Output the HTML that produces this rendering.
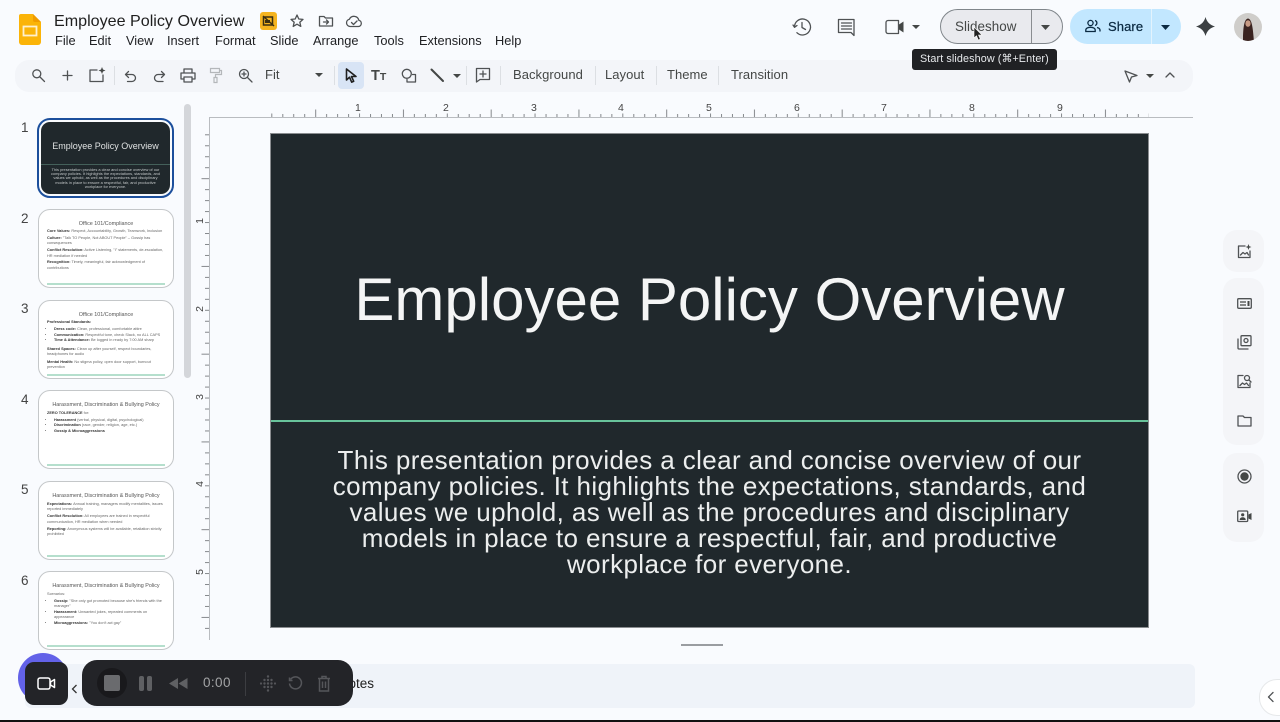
<!DOCTYPE html>
<html lang="en"><head><meta charset="utf-8"><title>Employee Policy Overview</title>
<style>
html,body{margin:0;padding:0;width:1280px;height:722px;overflow:hidden;background:#f9fbfe}
body{position:relative;font-family:"Liberation Sans",sans-serif;color:#3c4043}
.a{position:absolute}
.t{position:absolute;white-space:nowrap}
.m{position:absolute;top:33px;font-size:12.8px;line-height:16px;color:#202124;white-space:nowrap}
.tb{position:absolute;top:67px;font-size:13px;line-height:16px;color:#444746;white-space:nowrap;letter-spacing:.05px}
.sep{position:absolute;top:66px;width:1px;height:19px;background:#dcdfe3}
svg{position:absolute;overflow:visible}
.i{fill:none;stroke:#4f5254;stroke-width:1.3;stroke-linecap:round;stroke-linejoin:round}
.th{position:absolute;left:38px;width:134px;height:77px;border:1px solid #c4c7c9;border-radius:12px;background:#fff;overflow:hidden}
.th .h{position:absolute;left:0;right:0;top:11px;text-align:center;font-size:5.4px;line-height:7px;color:#555}
.th .b{position:absolute;left:8px;right:8px;top:20px;font-size:3.85px;line-height:5.4px;color:#666}
.th .b b{color:#333}
.th .b p{margin:0 0 1.6px}
.th .b ul{margin:0 0 1.6px;padding:0 0 0 7px}
.th .g{position:absolute;left:8px;right:8px;bottom:2.5px;height:1.5px;background:#b5dfcd}
.n{position:absolute;left:21px;font-size:13.5px;line-height:14px;color:#444;width:10px}
.pill{position:absolute;left:1223px;width:41px;background:#f4f5f8;border-radius:14px}
</style></head><body>

<!-- Slides logo -->
<svg style="left:19px;top:14px" width="22" height="31" viewBox="0 0 22 31">
<path d="M2 0H14L22 8V28a3 3 0 0 1-3 3H3a3 3 0 0 1-3-3V2a2 2 0 0 1 2-2z" fill="#fbb408"/>
<path d="M14 0L22 8H16a2 2 0 0 1-2-2z" fill="#f09c00"/>
<rect x="4.5" y="12.5" width="13" height="9" fill="none" stroke="#fff" stroke-width="1.8" opacity=".8"/>
</svg>

<div class="t" style="left:54px;top:11px;font-size:16.1px;line-height:20px;color:#1f1f1f">Employee Policy Overview</div>
<svg style="left:260px;top:12px" width="17" height="18" viewBox="0 0 17 18"><rect width="17" height="18" rx="3" fill="#f5b41f"/><path d="M3.5 5h9v8h-9zM3 4l11 10" fill="none" stroke="#3b2f10" stroke-width="1.5"/><path d="M5 8h5v3H5z" fill="#3b2f10"/></svg>
<svg style="left:289px;top:13px" width="16" height="16" viewBox="0 0 16 16"><path class="i" d="M8 2l1.800 4 4.200.4-3.200 2.800 1 4.200L8 11.200 4.200 13.400l1-4.200L2 6.400 6.200 6z" stroke-width="1.100"/></svg>
<svg style="left:318px;top:14px" width="16" height="14" viewBox="0 0 16 14"><path class="i" d="M1.500 2.500h4.500l1.500 1.500h7v8h-13zM5.500 8h5M8.500 6l2 2-2 2" stroke-width="1.100"/></svg>
<svg style="left:345px;top:14px" width="18" height="14" viewBox="0 0 18 14"><path class="i" d="M5 12.500a3.700 3.700 0 0 1-.6-7.300 5 5 0 0 1 9.400 1 3.200 3.200 0 0 1-.3 6.300zM6.500 8.500l2 2 3.500-3.500" stroke-width="1.100"/></svg>

<div class="m" style="left:55px">File</div><div class="m" style="left:89px">Edit</div><div class="m" style="left:126px">View</div><div class="m" style="left:167px">Insert</div><div class="m" style="left:215px">Format</div><div class="m" style="left:270px">Slide</div><div class="m" style="left:313px">Arrange</div><div class="m" style="left:374px">Tools</div><div class="m" style="left:419px">Extensions</div><div class="m" style="left:495px">Help</div>

<!-- top right -->
<svg style="left:792px;top:17px" width="20" height="20" viewBox="0 0 20 20"><path class="i" d="M2.500 10a8 8 0 1 1 2.400 5.700M1 8l1.500 2.300L5 8.500M10 5.500V10.500l3.500 2" stroke-width="1.700"/></svg>
<svg style="left:837px;top:18px" width="19" height="19" viewBox="0 0 19 19"><path class="i" d="M1.500 1.500h15.500v16l-3-3H1.500zM4.500 5h10M4.500 8h10M4.500 11h10" stroke-width="1.500"/></svg>
<svg style="left:885px;top:19px" width="20" height="16" viewBox="0 0 20 16"><path class="i" d="M3 1.500h10.500v13H3a2 2 0 0 1-2-2v-9a2 2 0 0 1 2-2z" stroke-width="1.500"/><path d="M14 5.500l4.500-3v11l-4.500-3z" fill="#444746"/></svg>
<svg style="left:912px;top:25px" width="8" height="4" viewBox="0 0 8 4"><path d="M0 0h8L4 4z" fill="#444746"/></svg>

<div class="a" style="left:940px;top:9px;width:121px;height:33px;border:1px solid #80868b;border-radius:18px;background:#e9eaee"></div>
<div class="a" style="left:1031px;top:10px;width:1px;height:33px;background:#8a8d91"></div>
<div class="t" style="left:955px;top:18px;font-size:13.4px;line-height:17px;color:#444746;letter-spacing:.05px">Slideshow</div>
<svg style="left:1041px;top:25px" width="9" height="5" viewBox="0 0 9 5"><path d="M0 0h9L4.500 5z" fill="#444746"/></svg>
<svg style="left:974px;top:27px" width="10" height="14" viewBox="0 0 10 14"><path d="M0 0l0 11 2.500-2.200 1.800 4.200 2-.9-1.800-4H8z" fill="#222" stroke="#fff" stroke-width=".6"/></svg>

<div class="a" style="left:1070px;top:9px;width:111px;height:35px;border-radius:18px;background:#c2e7ff"></div>
<div class="a" style="left:1151px;top:9px;width:1px;height:35px;background:#e3f3fd"></div>
<svg style="left:1085px;top:19px" width="16" height="14" viewBox="0 0 16 14"><circle cx="5.500" cy="4" r="2.600" fill="none" stroke="#0b2a42" stroke-width="1.300"/><path d="M.8 12.500v-1.500c0-1.800 2.500-2.700 4.700-2.700s4.700.9 4.700 2.700v1.500zM10 1.500a2.600 2.600 0 0 1 0 5M12 8.500c1.600.4 3 1.200 3 2.600v1.400" fill="none" stroke="#0b2a42" stroke-width="1.300"/></svg>
<div class="t" style="left:1108px;top:18px;font-size:13px;line-height:17px;color:#0b2a42;letter-spacing:.1px;-webkit-text-stroke:.25px #0b2a42">Share</div>
<svg style="left:1161px;top:25px" width="9" height="5" viewBox="0 0 9 5"><path d="M0 0h9L4.500 5z" fill="#0b2a42"/></svg>
<svg style="left:1196px;top:17px" width="19" height="19" viewBox="0 0 19 19"><path d="M9.500 0Q11.500 7.500 19 9.500 11.500 11.500 9.500 19 7.500 11.500 0 9.500 7.500 7.500 9.500 0z" fill="#3c4043"/></svg>
<svg style="left:1234px;top:13px" width="28" height="28" viewBox="0 0 28 28"><circle cx="14" cy="14" r="14" fill="#cfcdca"/><clipPath id="av"><circle cx="14" cy="14" r="14"/></clipPath><g clip-path="url(#av)"><path d="M9 28C9 18 9.500 6 14 5.500 18.500 6 19 18 20 28z" fill="#3a2320"/><ellipse cx="14" cy="10.500" rx="2.600" ry="3.300" fill="#c79a84"/></g></svg>

<!-- toolbar -->
<div class="a" style="left:15px;top:60px;width:1178px;height:32px;border-radius:14px;background:#f3f5f9"></div>
<svg style="left:31px;top:68px" width="15" height="15" viewBox="0 0 15 15"><circle cx="5.800" cy="5.800" r="4" class="i" stroke-width="1.200"/><path class="i" d="M9 9l4.500 4.500" stroke-width="1.300"/></svg>
<svg style="left:61px;top:69px" width="13" height="13" viewBox="0 0 13 13"><path class="i" d="M6.500 2v9M2 6.500h9"/></svg>
<svg style="left:88px;top:67px" width="18" height="16" viewBox="0 0 18 16"><path class="i" d="M9 3H2v11.500h13V8"/><path d="M14 0l1 2.500L17.500 3.500 15 4.500 14 7l-1-2.500L10.500 3.500 13 2.500z" fill="#444746"/></svg>
<div class="sep" style="left:114px"></div>
<svg style="left:124px;top:70px" width="14" height="14" viewBox="0 0 14 14"><path class="i" d="M4.500 1.500L1.500 4.500l3 3M1.500 4.500h6.500a3.500 3.500 0 0 1 0 7H3.500" stroke-width="1.200"/></svg>
<svg style="left:152px;top:70px" width="14" height="14" viewBox="0 0 14 14"><path class="i" d="M9.500 1.500l3 3-3 3M12.500 4.500H6a3.500 3.500 0 0 0 0 7h5" stroke-width="1.200"/></svg>
<svg style="left:180px;top:68px" width="16" height="15" viewBox="0 0 16 15"><path class="i" d="M4 4.500V1h8v3.500M4 11H1V5h14v6h-3M4 9h8v5H4z" stroke-width="1.400"/></svg>
<svg style="left:209px;top:67px" width="14" height="17" viewBox="0 0 14 17"><path d="M1.500 1.500h9v4h-9zM10.500 3.500h2v4H6.500v3M5 10.500h3v5H5z" fill="none" stroke="#b4b7ba" stroke-width="1.200"/></svg>
<svg style="left:238px;top:68px" width="15" height="15" viewBox="0 0 15 15"><circle cx="6" cy="6" r="4.500" class="i" stroke-width="1.200"/><path class="i" d="M9.500 9.500l4.500 4.500M4 6h4M6 4v4" stroke-width="1.200"/></svg>
<div class="tb" style="left:265px">Fit</div>
<svg style="left:315px;top:73px" width="8" height="4" viewBox="0 0 8 4"><path d="M0 0h8L4 4z" fill="#444746"/></svg>
<div class="sep" style="left:334px"></div>
<div class="a" style="left:338px;top:62px;width:26px;height:27px;border-radius:4px;background:#d8e4f5"></div>
<svg style="left:345px;top:68px" width="13" height="16" viewBox="0 0 13 16"><path d="M1.500 1v11l3-2.800 2.200 5 2-.9-2.200-4.800h4.500z" fill="none" stroke="#1f1f1f" stroke-width="1.600" stroke-linejoin="round"/></svg>
<div class="t" style="left:371px;top:68px;font-size:14.5px;line-height:17px;color:#444746;font-weight:700">T<span style="font-size:10.5px">T</span></div>
<svg style="left:401px;top:68px" width="16" height="15" viewBox="0 0 16 15"><circle cx="5.800" cy="5.800" r="4.500" class="i" stroke-width="1.200"/><path class="i" d="M11.500 6.500h3v7.500H6v-2.500" stroke-width="1.200"/></svg>
<svg style="left:430px;top:68px" width="15" height="15" viewBox="0 0 15 15"><path d="M1.500 1.500L13 13" stroke="#444746" stroke-width="2" stroke-linecap="round"/></svg>
<svg style="left:453px;top:74px" width="8" height="4" viewBox="0 0 8 4"><path d="M0 0h8L4 4z" fill="#444746"/></svg>
<div class="sep" style="left:466px"></div>
<svg style="left:475px;top:67px" width="16" height="16" viewBox="0 0 16 16"><path class="i" d="M1.500 1.500h13v11H5L1.500 15zM8 4v6M5 7h6"/></svg>
<div class="sep" style="left:500px"></div>
<div class="tb" style="left:513px">Background</div>
<div class="sep" style="left:595px"></div>
<div class="tb" style="left:605px">Layout</div>
<div class="sep" style="left:656px"></div>
<div class="tb" style="left:667px">Theme</div>
<div class="sep" style="left:718px"></div>
<div class="tb" style="left:731px">Transition</div>
<svg style="left:1124px;top:70px" width="14" height="13" viewBox="0 0 14 13"><path class="i" d="M1 1l12 4.500L7.500 7 5.500 12z" stroke-width="1.200"/></svg>
<svg style="left:1146px;top:74px" width="8" height="4" viewBox="0 0 8 4"><path d="M0 0h8L4 4z" fill="#444746"/></svg>
<svg style="left:1165px;top:72px" width="10" height="6" viewBox="0 0 10 6"><path class="i" d="M1 5l4-4 4 4" stroke-width="1.200"/></svg>

<!-- tooltip -->
<div class="a" style="left:912px;top:49px;width:145px;height:21px;background:#202124;border-radius:3px"></div>
<div class="t" style="left:920px;top:53px;font-size:10.8px;line-height:13px;color:#e8eaed;letter-spacing:.1px">Start slideshow (⌘+Enter)</div>

<!-- rulers -->
<svg style="left:0;top:0" width="1280" height="722">
<defs>
<pattern id="rh" x="271.300" y="100" width="87.750" height="18" patternUnits="userSpaceOnUse">
<path d="M.5 13.500v4.500M11.500 14v4M22.400 14v4M33.400 14v4M44.400 9.500v8.500M55.300 14v4M66.300 14v4M77.300 14v4" stroke="#85888c" stroke-width="1" fill="none"/>
</pattern>
<pattern id="rv" x="200" y="134.300" width="9" height="87.750" patternUnits="userSpaceOnUse">
<path d="M5 .5h4M5 11.500h4M5 22.400h4M5 33.400h4M1.500 44.400h7.500M5 55.300h4M5 66.300h4M5 77.300h4" stroke="#85888c" stroke-width="1" fill="none"/>
</pattern>
</defs>
<rect x="271" y="100" width="878" height="18" fill="url(#rh)"/>
<rect x="200" y="134" width="9" height="504" fill="url(#rv)"/>
<path d="M209.500 640V117.500H1193" fill="none" stroke="#b9bcc0" stroke-width="1"/>
</svg>
<div class="t" style="left:355px;top:102px;font-size:10.500px;line-height:12px;color:#444">1</div>
<div class="t" style="left:443px;top:102px;font-size:10.500px;line-height:12px;color:#444">2</div>
<div class="t" style="left:531px;top:102px;font-size:10.500px;line-height:12px;color:#444">3</div>
<div class="t" style="left:618px;top:102px;font-size:10.500px;line-height:12px;color:#444">4</div>
<div class="t" style="left:706px;top:102px;font-size:10.500px;line-height:12px;color:#444">5</div>
<div class="t" style="left:794px;top:102px;font-size:10.500px;line-height:12px;color:#444">6</div>
<div class="t" style="left:881px;top:102px;font-size:10.500px;line-height:12px;color:#444">7</div>
<div class="t" style="left:969px;top:102px;font-size:10.500px;line-height:12px;color:#444">8</div>
<div class="t" style="left:1057px;top:102px;font-size:10.500px;line-height:12px;color:#444">9</div>
<div class="t" style="left:197px;top:215px;font-size:10.500px;line-height:12px;color:#444;transform:rotate(-90deg)">1</div>
<div class="t" style="left:197px;top:303px;font-size:10.500px;line-height:12px;color:#444;transform:rotate(-90deg)">2</div>
<div class="t" style="left:197px;top:391px;font-size:10.500px;line-height:12px;color:#444;transform:rotate(-90deg)">3</div>
<div class="t" style="left:197px;top:478px;font-size:10.500px;line-height:12px;color:#444;transform:rotate(-90deg)">4</div>
<div class="t" style="left:197px;top:566px;font-size:10.500px;line-height:12px;color:#444;transform:rotate(-90deg)">5</div>

<!-- main slide -->
<div class="a" style="left:271px;top:134px;width:877px;height:493px;background:#20282c;outline:1px solid #8a8d90"></div>
<div class="a" style="left:271px;top:420px;width:877px;height:2px;background:#68c39b"></div>
<div class="t" style="left:271px;width:877px;top:264px;text-align:center;font-size:60px;line-height:72px;color:#f4f5f5">Employee Policy Overview</div>
<div class="t" style="left:271px;width:877px;top:447px;text-align:center;font-size:26px;line-height:26px;color:#eceeee;letter-spacing:.39px">This presentation provides a clear and concise overview of our<br>company policies. It highlights the expectations, standards, and<br>values we uphold, as well as the procedures and disciplinary<br>models in place to ensure a respectful, fair, and productive<br>workplace for everyone.</div>

<!-- filmstrip -->
<div class="a" style="left:184px;top:104px;width:7px;height:274px;border-radius:4px;background:#d4d6da"></div>
<div class="n" style="top:121px">1</div><div class="n" style="top:212px">2</div><div class="n" style="top:302px">3</div><div class="n" style="top:393px">4</div><div class="n" style="top:483px">5</div><div class="n" style="top:574px">6</div>

<div class="a" style="left:37px;top:118px;width:133px;height:76px;border:2px solid #1c4f9c;border-radius:13px;background:#f9fbfd;padding:0"></div>
<div class="a" style="left:41px;top:122px;width:129px;height:72px;border-radius:9px;background:#20282c;overflow:hidden">
<div class="a" style="left:0;right:0;top:41.500px;height:1px;background:#44605a"></div>
<div class="t" style="left:0;width:129px;top:18px;text-align:center;font-size:9px;line-height:12px;color:#dfe2e2">Employee Policy Overview</div>
<div class="t" style="left:0;width:129px;top:46px;text-align:center;font-size:3.900px;line-height:4.200px;color:#c3c7c8">This presentation provides a clear and concise overview of our<br>company policies. It highlights the expectations, standards, and<br>values we uphold, as well as the procedures and disciplinary<br>models in place to ensure a respectful, fair, and productive<br>workplace for everyone.</div>
</div>

<div class="th" style="top:209px"><div class="h">Office 101/Compliance</div><div class="b" style="top:19px"><p><b>Core Values:</b> Respect, Accountability, Growth, Teamwork, Inclusion</p><p><b>Culture:</b> "Talk TO People, Not ABOUT People" – Gossip has consequences</p><p style="margin-bottom:1px"><b>Conflict Resolution:</b> Active Listening, "I" statements, de-escalation, HR mediation if needed</p><p><b>Recognition:</b> Timely, meaningful, fair acknowledgment of contributions</p></div><div class="g"></div></div>

<div class="th" style="top:300px"><div class="h">Office 101/Compliance</div><div class="b" style="top:19px"><p style="margin-bottom:2px"><b>Professional Standards:</b></p><ul style="margin-bottom:3px"><li><b>Dress code:</b> Clean, professional, comfortable attire</li><li><b>Communication:</b> Respectful tone, check Slack, no ALL CAPS</li><li><b>Time &amp; Attendance:</b> Be logged in ready by 7:00 AM sharp</li></ul><p style="margin-bottom:2.500px"><b>Shared Spaces:</b> Clean up after yourself, respect boundaries, headphones for audio</p><p><b>Mental Health:</b> No stigma policy, open door support, burnout prevention</p></div><div class="g"></div></div>

<div class="th" style="top:390px"><div class="h">Harassment, Discrimination &amp; Bullying Policy</div><div class="b" style="top:20px"><p><b>ZERO TOLERANCE</b> for:</p><ul><li><b>Harassment</b> (verbal, physical, digital, psychological)</li><li><b>Discrimination</b> (race, gender, religion, age, etc.)</li><li><b>Gossip &amp; Microaggressions</b></li></ul></div><div class="g"></div></div>

<div class="th" style="top:481px"><div class="h">Harassment, Discrimination &amp; Bullying Policy</div><div class="b" style="top:20px"><p><b>Expectations:</b> Annual training, managers modify mentalities, issues reported immediately</p><p><b>Conflict Resolution:</b> All employees are trained in respectful communication, HR mediation when needed</p><p><b>Reporting:</b> Anonymous systems will be available, retaliation strictly prohibited</p></div><div class="g"></div></div>

<div class="th" style="top:571px"><div class="h">Harassment, Discrimination &amp; Bullying Policy</div><div class="b" style="top:20px"><p>Scenarios:</p><ul><li><b>Gossip:</b> "She only got promoted because she's friends with the manager"</li><li><b>Harassment:</b> Unwanted jokes, repeated comments on appearance</li><li><b>Microaggressions:</b> "You don't act gay"</li></ul></div><div class="g"></div></div>

<!-- split handle -->
<div class="a" style="left:681px;top:644px;width:42px;height:2px;background:#9a9da1"></div>

<!-- notes -->
<div class="a" style="left:25px;top:664px;width:1170px;height:44px;border-radius:6px;background:#eff3f9"></div>
<div class="t" style="left:287px;top:675px;font-size:13.5px;line-height:17px;color:#1f1f1f">Speaker notes</div>

<!-- right side panel -->
<div class="pill" style="top:230px;height:42px"></div>
<div class="pill" style="top:278px;height:167px"></div>
<div class="pill" style="top:453px;height:89px"></div>
<svg style="left:1237px;top:244px" width="15" height="15" viewBox="0 0 15 15"><path class="i" d="M8 2H1.500v11.500H13V7M3.500 11l2.500-2.500 2 1.500 2-1.500 1.500 2.500" stroke-width="1.200"/><path d="M11.500 0l.8 2.200 2.200.8-2.200.8-.8 2.200-.8-2.200L8.500 3l2.200-.8z" fill="#444746"/></svg>
<svg style="left:1237px;top:298px" width="15" height="11" viewBox="0 0 15 11"><rect x=".7" y=".7" width="13.600" height="9.600" rx="1" class="i" stroke-width="1.300"/><path d="M3 4h6M3 7h6" stroke="#444746" stroke-width="1.300"/><rect x="10.500" y="3" width="2" height="5" fill="#444746"/></svg>
<svg style="left:1237px;top:335px" width="15" height="15" viewBox="0 0 15 15"><rect x="4" y=".7" width="10" height="10" rx="1" class="i" stroke-width="1.200"/><circle cx="9" cy="5.500" r="2" class="i" stroke-width="1.200"/><path class="i" d="M1 4v9a1 1 0 0 0 1 1h9" stroke-width="1.200"/></svg>
<svg style="left:1237px;top:374px" width="15" height="15" viewBox="0 0 15 15"><path class="i" d="M6 1.500H1v12h12V9M3 11.500l2.500-2.500 2 1.500 2-1.500 2 2.500" stroke-width="1.200"/><circle cx="10" cy="4" r="2.500" class="i" stroke-width="1.200"/><path class="i" d="M12 6l2 2" stroke-width="1.200"/></svg>
<svg style="left:1237px;top:415px" width="15" height="12" viewBox="0 0 15 12"><path class="i" d="M1 1h5l1.500 1.500H14V11H1z" stroke-width="1.200"/></svg>
<svg style="left:1237px;top:469px" width="15" height="15" viewBox="0 0 15 15"><circle cx="7.500" cy="7.500" r="6.500" class="i" stroke-width="1.300"/><circle cx="7.500" cy="7.500" r="4.200" fill="#444746"/></svg>
<svg style="left:1237px;top:510px" width="15" height="13" viewBox="0 0 15 13"><rect x=".7" y="1" width="10" height="10.500" rx="1" class="i" stroke-width="1.200"/><circle cx="5.700" cy="4.800" r="1.600" fill="#444746"/><path d="M2.700 10c0-2 1.500-2.700 3-2.700s3 .7 3 2.700z" fill="#444746"/><path d="M11.500 4.500L14.500 3v7l-3-1.500z" fill="#444746"/></svg>

<!-- collapse button -->
<div class="a" style="left:1259px;top:679px;width:40px;height:35px;border-radius:18px;background:#fff;border:1px solid #e6e8ea"></div>
<svg style="left:1267px;top:691px" width="8" height="12" viewBox="0 0 8 12"><path class="i" d="M6 1.500L1.500 6 6 10.500" stroke-width="1.400"/></svg>

<!-- recorder -->
<div class="a" style="left:18px;top:653px;width:50px;height:50px;border-radius:50%;background:#6362e8"></div>
<div class="a" style="left:25px;top:662px;width:43px;height:43px;border-radius:9px;background:#232428"></div>
<svg style="left:37px;top:677px" width="19" height="13" viewBox="0 0 19 13"><rect x="1" y="1" width="12" height="11" rx="2" fill="none" stroke="#fff" stroke-width="1.500"/><path d="M13.500 5l4-2.500v8l-4-2.500z" fill="none" stroke="#fff" stroke-width="1.500" stroke-linejoin="round"/></svg>
<svg style="left:71px;top:684px" width="7" height="10" viewBox="0 0 7 10"><path d="M5.500 1L1.500 5l4 4" fill="none" stroke="#333" stroke-width="1.300"/></svg>
<div class="a" style="left:82px;top:660px;width:271px;height:46px;border-radius:15px;background:#232428"></div>
<div class="a" style="left:97px;top:668px;width:30px;height:30px;border-radius:50%;background:#19191c"></div>
<div class="a" style="left:104px;top:675px;width:16px;height:16px;border-radius:2px;background:#6a6b6e"></div>
<div class="a" style="left:139px;top:676px;width:5px;height:15px;border-radius:2px;background:#5f6063"></div>
<div class="a" style="left:147px;top:676px;width:5px;height:15px;border-radius:2px;background:#5f6063"></div>
<svg style="left:169px;top:678px" width="19" height="11" viewBox="0 0 19 11"><path d="M0 5.500L9 0v11zM9.500 5.500L18.500 0v11z" fill="#5f6063"/></svg>
<div class="t" style="left:203px;top:675px;font-size:13.500px;line-height:16px;color:#a3a4a6;letter-spacing:.4px">0:00</div>
<div class="a" style="left:245px;top:672px;width:1px;height:24px;background:#3c3d41"></div>
<svg style="left:260px;top:675px" width="16" height="17" viewBox="0 0 16 17"><g fill="#55565a"><circle cx="8" cy="1.500" r="1.200"/><circle cx="8" cy="5" r="1.200"/><circle cx="8" cy="8.500" r="1.200"/><circle cx="8" cy="12" r="1.200"/><circle cx="8" cy="15.500" r="1.200"/><circle cx="4.500" cy="5" r="1.200"/><circle cx="4.500" cy="8.500" r="1.200"/><circle cx="4.500" cy="12" r="1.200"/><circle cx="11.500" cy="5" r="1.200"/><circle cx="11.500" cy="8.500" r="1.200"/><circle cx="11.500" cy="12" r="1.200"/><circle cx="1" cy="8.500" r="1.100"/><circle cx="15" cy="8.500" r="1.100"/></g></svg>
<svg style="left:288px;top:676px" width="15" height="15" viewBox="0 0 15 15"><path d="M2.500 3.500a6 6 0 1 1-1 4M1.500 1.500v3h3" fill="none" stroke="#55565a" stroke-width="1.500"/></svg>
<svg style="left:317px;top:675px" width="14" height="17" viewBox="0 0 14 17"><path d="M1 3.500h12M5 3.500V1.500h4v2M2.500 3.500V16h9V3.500M5.500 6.500V13M8.500 6.500V13" fill="none" stroke="#55565a" stroke-width="1.500"/></svg>

<!-- bottom edge -->
<div class="a" style="left:0;top:720px;width:1280px;height:2px;background:#111"></div>
</body></html>
